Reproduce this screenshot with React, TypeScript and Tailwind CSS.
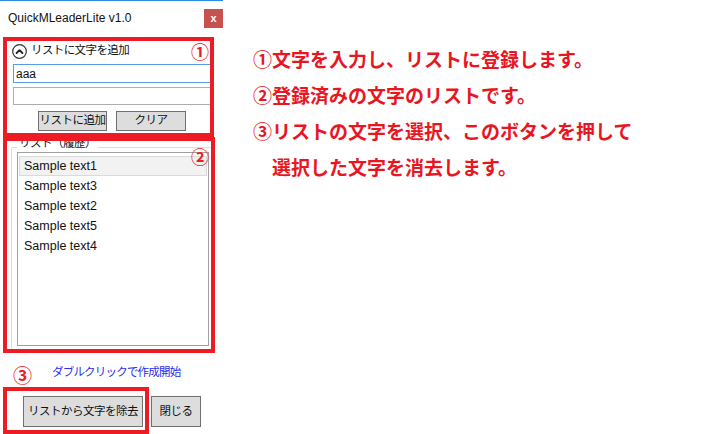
import React from "react";

const ITEMS = ["Sample text1", "Sample text3", "Sample text2", "Sample text5", "Sample text4"];

const UI_FONT = { fontFamily: '"Liberation Sans", "Noto Sans CJK JP", sans-serif' };

function ExpanderIcon() {
  return (
    <svg width="15" height="15" viewBox="0 0 15 15" className="shrink-0">
      <circle cx="7.5" cy="7.5" r="6.8" fill="white" stroke="#333" strokeWidth="1.2" />
      <path d="M4.6 9 7.5 6.1 10.4 9" fill="none" stroke="#222" strokeWidth="1.8" strokeLinecap="round" strokeLinejoin="round" />
    </svg>
  );
}

function WinButton({ children, className }: { children: React.ReactNode; className: string }) {
  return (
    <button
      type="button"
      className={`flex items-center justify-center border border-[#707070] bg-[#dddddd] text-[11.5px] tracking-[-0.5px] text-[#111] ${className}`}
    >
      {children}
    </button>
  );
}

export default function App() {
  return (
    <div className="relative flex h-[434px] w-[709px] overflow-hidden bg-white" style={UI_FONT}>
      {/* app window */}
      <div className="flex w-[223px] shrink-0 flex-col">
        <div className="h-px w-full bg-[#2b8be6]" />
        <div className="flex h-[34px] items-center justify-between">
          <span className="ml-[8px] text-[12px] text-[#111]">QuickMLeaderLite v1.0</span>
          <div className="flex h-[19px] w-[19px] items-center justify-center bg-[#c75050] text-[11px] font-bold leading-none text-white">
            x
          </div>
        </div>

        <div className="mt-[8px] flex h-[16px] items-center gap-[4px] pl-[12px]">
          <ExpanderIcon />
          <span className="text-[11.5px] tracking-[-0.6px] text-[#111]">リストに文字を追加</span>
        </div>
        <div className="ml-[13px] mt-[5px] flex h-[19px] w-[199px] items-center border border-[#569de5] pl-[2px] text-[12px] text-[#111]">
          aaa
        </div>
        <div className="ml-[13px] mt-[4px] h-[18px] w-[199px] border border-[#abadb3]" />
        <div className="mt-[6px] flex h-[20px]">
          <WinButton className="ml-[38px] h-[20px] w-[69px]">リストに追加</WinButton>
          <WinButton className="ml-[9px] h-[20px] w-[70px]">クリア</WinButton>
        </div>

        <div className="relative ml-[11px] mt-[16px] h-[204px] w-[201px] rounded-[2px] border border-[#d5dfe5]">
          <span className="absolute -top-[10px] left-[5px] bg-white px-[2px] text-[11.5px] leading-none tracking-[-0.5px] text-[#111]">
            リスト（履歴）
          </span>
          <div className="ml-[5px] mt-[4px] h-[194px] w-[192px] border border-[#a0a0a0] pt-[3px]">
            {ITEMS.map((item, i) => (
              <div
                key={item}
                className={`mx-px flex h-[20px] items-center pl-[4px] text-[12.5px] text-[#111] ${
                  i === 0 ? "border border-[#dadada] bg-[#f2f2f2]" : "border border-transparent"
                }`}
              >
                {item}
              </div>
            ))}
          </div>
        </div>

        <div className="mt-[14px] flex h-[16px] items-center pl-[52px] text-[11.5px] tracking-[-0.8px] text-[#2c2cf0]">
          ダブルクリックで作成開始
        </div>
        <div className="mt-[15px] flex">
          <WinButton className="ml-[23px] h-[31px] w-[120px]">リストから文字を除去</WinButton>
          <WinButton className="ml-[8px] h-[31px] w-[50px]">閉じる</WinButton>
        </div>
      </div>

      {/* explanation text */}
      <div
        className="ml-[30px] pt-[41px] text-[19px] font-bold leading-[36px] text-[#e9161f]"
        style={{ fontFamily: '"Noto Sans CJK JP", sans-serif' }}
      >
        <p>①文字を入力し、リストに登録します。</p>
        <p>②登録済みの文字のリストです。</p>
        <p>③リストの文字を選択、このボタンを押して</p>
        <p className="pl-[19px]">選択した文字を消去します。</p>
      </div>

      {/* annotation frames */}
      <div className="pointer-events-none absolute left-[3px] top-[37px] h-[100px] w-[211px] border-[4px] border-[#ed1c24]" />
      <div className="pointer-events-none absolute left-[3px] top-[137px] h-[216px] w-[212px] border-[4px] border-[#ed1c24]" />
      <div className="pointer-events-none absolute left-[3px] top-[387px] h-[47px] w-[146px] border-[4px] border-[#ed1c24]" />
      <span
        className="absolute left-[191px] top-[41px] text-[18px] font-bold leading-[20px] text-[#ed1c24]"
        style={{ fontFamily: '"Noto Sans CJK JP", sans-serif' }}
      >
        ①
      </span>
      <span
        className="absolute left-[191px] top-[146px] text-[18px] font-bold leading-[20px] text-[#ed1c24]"
        style={{ fontFamily: '"Noto Sans CJK JP", sans-serif' }}
      >
        ②
      </span>
      <span
        className="absolute left-[13px] top-[365px] text-[19px] font-bold leading-[20px] text-[#ed1c24]"
        style={{ fontFamily: '"Noto Sans CJK JP", sans-serif' }}
      >
        ③
      </span>
    </div>
  );
}
